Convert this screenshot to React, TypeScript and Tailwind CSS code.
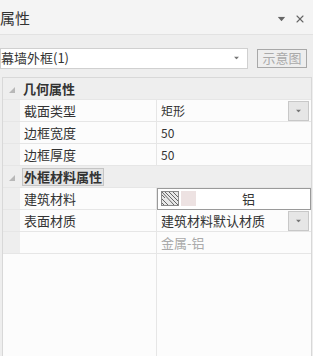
import { X } from "lucide-react";

const font = { fontFamily: '"Noto Sans CJK SC", "Liberation Sans", sans-serif' };

function Caret({ className = "" }: { className?: string }) {
  return (
    <svg width="7" height="4" viewBox="0 0 7 4" className={className}>
      <path d="M0 0h7L3.5 4z" fill="currentColor" />
    </svg>
  );
}

function Expander() {
  return (
    <svg width="6" height="6" viewBox="0 0 6 6" className="text-[#b8b8b8]">
      <path d="M6 0v6H0z" fill="currentColor" />
    </svg>
  );
}

function DropButton() {
  return (
    <div className="ml-auto mr-[2px] flex h-[20px] w-[21px] items-center justify-center border border-[#c8c8c8] bg-[#e6e6e6] text-[#777]">
      <Caret className="scale-75" />
    </div>
  );
}

function GroupRow({ title, focused }: { title: string; focused?: boolean }) {
  return (
    <div className="flex h-[22px] items-center border-b border-[#e6e6e6] bg-[#eeeeee]">
      <div className="flex w-[17px] shrink-0 items-center justify-center pt-[2px]">
        <Expander />
      </div>
      <span
        className={
          focused
            ? "ml-[2px] border border-[#c4c4c4] bg-[#e4e4e4] px-[1px] text-[13px] leading-[16px] font-bold text-[#333]"
            : "ml-[3px] text-[13px] font-bold text-[#333]"
        }
      >
        {title}
      </span>
    </div>
  );
}

function PropRow({ label, children }: { label: string; children?: React.ReactNode }) {
  return (
    <div className="flex h-[22px] border-b border-[#e6e6e6]">
      <div className="w-[17px] shrink-0 bg-[#eeeeee]" />
      <div className="flex w-[137px] shrink-0 items-center border-r border-[#e6e6e6] bg-[#fcfcfc] pl-[4px] text-[13px] text-[#333]">
        {label}
      </div>
      <div className="flex flex-1 items-center bg-[#fcfcfc] text-[12px] text-[#333]">{children}</div>
    </div>
  );
}

export default function App() {
  return (
    <div className="flex h-[356px] w-[313px] flex-col overflow-hidden bg-[#eeeeee]" style={font}>
      {/* title bar */}
      <div className="flex h-[35px] shrink-0 items-center border-b border-[#e2e2e2] bg-[#f4f4f4] pt-[3px]">
        <span className="text-[15px] text-[#333]">属性</span>
        <div className="ml-auto flex items-center gap-[9px] pr-[7px] text-[#666]">
          <Caret className="scale-110" />
          <X size={12} strokeWidth={2.2} />
        </div>
      </div>

      {/* type selector */}
      <div className="flex h-[42px] shrink-0 items-center pt-[4px]">
        <div className="flex h-[21px] w-[248px] items-center border border-[#d0d0d0] bg-white text-[13px] text-[#333]">
          <span>幕墙外框(1)</span>
          <Caret className="ml-auto mr-[7px] scale-75 text-[#777]" />
        </div>
        <div className="ml-[9px] flex h-[19px] w-[50px] items-center justify-center border border-[#a8a8a8] text-[13px] text-[#aaa]">
          示意图
        </div>
      </div>

      {/* property grid */}
      <div className="ml-[2px] flex w-[310px] flex-1 flex-col border border-b-0 border-[#d8d8d8] bg-[#fcfcfc]">
        <GroupRow title="几何属性" />
        <PropRow label="截面类型">
          <span className="pl-[4px]">矩形</span>
          <DropButton />
        </PropRow>
        <PropRow label="边框宽度">
          <span className="pl-[4px]">50</span>
        </PropRow>
        <PropRow label="边框厚度">
          <span className="pl-[4px]">50</span>
        </PropRow>
        <GroupRow title="外框材料属性" focused />
        <PropRow label="建筑材料">
          <div className="flex h-[22px] w-full items-center border border-[#9a9a9a] bg-white">
            <svg width="18" height="15" viewBox="0 0 18 15" className="ml-[3px]">
              <rect x="0.5" y="0.5" width="17" height="14" fill="#e8e8e8" stroke="#8a8a8a" />
              <path
                d="M1 4L4 7M1 1L13 14M4 1L17 14M8 1L17 10M12 1L17 6M1 8L7 14M1 12L3 14"
                stroke="#666"
                strokeWidth="1"
              />
            </svg>
            <div className="ml-[2px] h-[15px] w-[15px] bg-[#ede2e2]" />
            <span className="ml-[46px] text-[13px]">铝</span>
          </div>
        </PropRow>
        <PropRow label="表面材质">
          <span className="pl-[4px] text-[13px]">建筑材料默认材质</span>
          <DropButton />
        </PropRow>
        <PropRow label="">
          <span className="pl-[4px] text-[13px] text-[#aaa]">金属-铝</span>
        </PropRow>
        <div className="flex flex-1">
          <div className="w-[154px] shrink-0 border-r border-[#e6e6e6]" />
        </div>
      </div>
    </div>
  );
}
